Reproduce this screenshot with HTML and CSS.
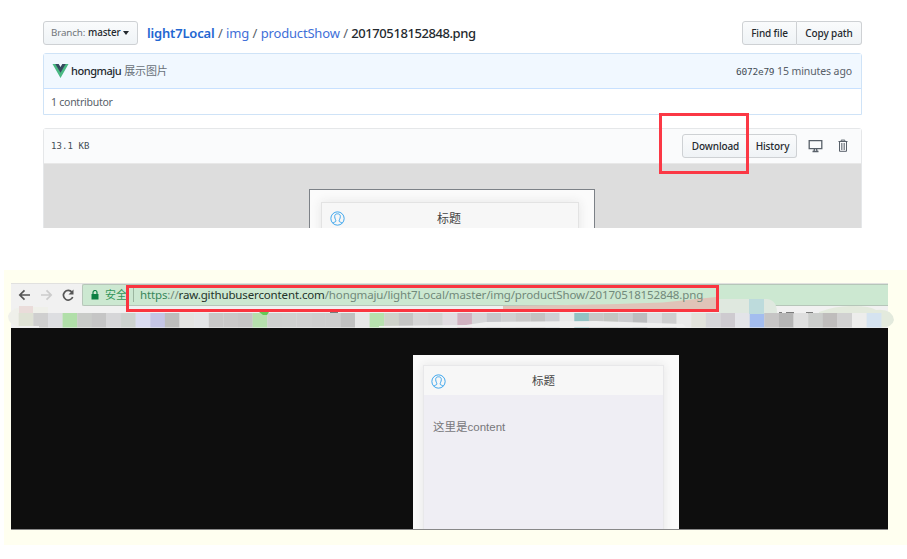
FILE: index.html
```html
<!DOCTYPE html>
<html lang="zh">
<head>
<meta charset="utf-8">
<title>light7Local</title>
<link rel="stylesheet" href="styles.css">
</head>
<body>
<svg class="defs" width="0" height="0"><symbol id="user" viewBox="0 0 16 16"><circle cx="8" cy="8" r="7.1"/><path d="M3 13c1-1.3 3.2-1 3.3-2.3C6.400 9.500 5 8.500 5 5.800 5 3.800 6.200 3 8 3s3 .8 3 2.800c0 2.700-1.400 3.700-1.300 4.900.1 1.300 2.300 1 3.300 2.300"/></symbol></svg>
<section class="repo">
  <header class="pathbar">
    <button class="btn branch"><span>Branch:</span> <b>master</b><i></i></button>
    <nav class="crumbs"><a class="root">light7Local</a> / <a>img</a> / <a>productShow</a> / <strong>20170518152848.png</strong></nav>
    <div class="group"><button class="btn find">Find file</button><button class="btn copy">Copy path</button></div>
  </header>
  <div class="commit">
    <div class="author">
      <svg class="vue" viewBox="0 0 16 14"><path fill="#4ab983" d="M0 0h3.400L8 7.700 12.600 0H16L8 14z"/><path fill="#35495e" d="M2.800 0h3.400L8 3 9.800 0h3.400L8 8.800z"/></svg>
      <b>hongmaju</b><span class="message">展示图片</span>
      <div class="when"><code>6072e79</code> 15 minutes ago</div>
    </div>
    <div class="contributors">1 contributor</div>
  </div>
  <div class="file">
    <div class="filebar">
      <code>13.1 KB</code>
      <div class="group download-group"><button class="btn download">Download</button><button class="btn history">History</button><span class="redbox"></span></div>
      <svg class="monitor" viewBox="0 0 14 14"><path d="M.7 1.700h12.600v8H.7zM6 10l-.5 2.200M8 10l.5 2.200M4 12.500h6"/></svg>
      <svg class="trash" viewBox="0 0 10 14"><path d="M.5 2.500h9M3.200 2.300V1.100h3.600v1.200M1.500 3v9.300h7V3"/><path class="slats" d="M3.500 4v7M5 4v7M6.500 4v7"/></svg>
    </div>
    <div class="preview"><div class="shot"><div class="phone"><div class="titlebar"><svg><use href="#user"/></svg><span>标题</span></div></div></div></div>
  </div>
</section>
<section class="raw">
  <div class="browser">
    <div class="toolbar">
      <svg class="nav" viewBox="0 0 71 23"><g fill="none" stroke-width="1.700"><path stroke="#555" d="M19 11H9M13.500 6.300 8.800 11l4.700 4.700"/><path stroke="#ccc" d="M30 11h10M35.500 6.300l4.700 4.700-4.700 4.700"/><path stroke="#555" d="M61 8.300A4.800 4.800 0 1 0 61.700 13"/></g><path fill="#555" d="M62.500 5.500v5h-5z"/></svg>
      <div class="address">
        <svg class="lock" viewBox="0 0 8 10"><path fill="#0b8043" d="M.5 4h7v5.500h-7z"/><path fill="none" stroke="#0b8043" stroke-width="1.200" d="M2 4V2.500a2 2 0 0 1 4 0V4"/></svg>
        <span class="safe">安全</span><span class="divider"></span>
        <span class="tint"></span>
        <span class="url"><span class="scheme">https</span>://<b>raw.githubusercontent.com</b>/hongmaju/light7Local/master/img/productShow/20170518152848.png</span>
        <span class="redframe"></span>
      </div>
    </div>
    <div class="bookmarks">
      <svg class="mosaic" viewBox="0 0 890 34">
        <path fill="#eff0ea" d="M22 10h26v20H20Q8 28 8 19 10 12 22 10z"/>
        <path fill="#e3eadd" d="M819 15q18-7 35-6 16 0 22 4 16-2 18 10-2 9-18 7h-15V17h-42z"/>
        <path fill="#eadcda" d="M19 9h14v8H19z"/>
        <path stroke="#555" stroke-width="1.500" d="M330 16h8M779 16h3M786 16h8M806 16h7"/>
        <g id="tiles"></g>
        <path fill="#66c956" d="M259 15h10l-2 3h-4z"/>
        <path fill="#efefef" d="M379 29l87-1 20-3 110-1 87 3 3 3H379zM18 29h21v2H18z"/>
      </svg>
      <svg class="smudge" viewBox="0 0 60 15"><path fill="#dfe8df" d="M0 0h48q10 1 10 14H0z"/><path fill="#bddbdc" d="M30 0h15v15H30z"/></svg>
    </div>
    <div class="canvas"><div class="shot2"><div class="phone2"><div class="titlebar2"><svg><use href="#user"/></svg><span>标题</span></div><p>这里是content</p></div></div></div>
  </div>
</section>
<script src="mosaic.js"></script>
</body>
</html>
```
FILE: styles.css
```css
*{box-sizing:border-box}
body{margin:0;width:907px;height:559px;overflow:hidden;background:#fff;color:#24292e;font:11px/16px "Noto Sans","Noto Sans CJK SC",sans-serif}
button{font:inherit}
b{font-weight:600}
code{font:10px "DejaVu Sans Mono",monospace}
.defs{position:absolute}
symbol{fill:none;stroke:#35a2ec;stroke-width:1}
.repo{height:228px;padding:21px 46px 0 43px;width:907px;overflow:hidden}
.pathbar{display:flex;height:24px;align-items:center}
.btn{height:24px;padding:0;border:1px solid #ced1d4;border-radius:3px;background:linear-gradient(#fafbfc,#eff3f6);color:#24292e;font-size:10px;font-weight:500;line-height:22px;letter-spacing:-.12px;white-space:nowrap}
.branch{width:95px;display:flex;align-items:center;padding-left:7px;font-size:9.800px;letter-spacing:-.15px}
.branch b{font-weight:500}
.branch span{color:#707579;font-weight:400;margin-right:3px}
.branch i{border:3.500px solid transparent;border-top:4px solid #24292e;border-bottom:0;margin-left:3px}
.crumbs{margin-left:9px;font-size:13px;line-height:24px;white-space:nowrap;color:#586069;width:335px;letter-spacing:-.18px;word-spacing:.3px}
.crumbs a{color:#416fd8}.crumbs .root{font-weight:600;color:#2366d1}.crumbs strong{font-weight:500;color:#24292e;letter-spacing:-.43px}
.group{display:flex;margin-left:auto}
.group .btn:first-child{border-radius:3px 0 0 3px}
.group .btn:nth-child(2){border-left:0;border-radius:0 3px 3px 0}
.find{width:55px}.copy{width:65px}
.pathbar .group{margin-right:-1px}
.commit{margin-top:8px;width:819px;height:62px;border:1px solid #cfe3f7;border-radius:3px 3px 0 0}
.author{height:35px;padding:0 9px 0 8px;background:#f1f8ff;border-bottom:1px solid #c8e1ff;display:flex;align-items:center}
.vue{width:17px;height:14px;margin-right:2px}
.message{color:#687078;margin-left:3px;letter-spacing:-.2px}
.author b{letter-spacing:-.45px;font-weight:500}
.when{margin-left:auto;color:#586069;font-size:10.500px;letter-spacing:-.1px}
.when code{color:#444d56;font-size:9.500px;letter-spacing:-.25px}
.contributors{padding:5px 7px;color:#586069;font-size:10.500px;line-height:16px;letter-spacing:-.25px}
.file{margin-top:13px;width:819px;border:1px solid #e5e7e9;border-radius:3px 3px 0 0}
.filebar{height:35px;background:#fafbfc;border-bottom:1px solid #e8e8e8;display:flex;align-items:center;padding:0 13px 0 7px}
.filebar code{font-size:9px;color:#444d56;letter-spacing:.1px}
.download-group{position:relative}
.download{width:67px}.history{width:48px}
.redbox{position:absolute;left:-23px;top:-21px;width:90px;height:61px;border:3px solid #fb3845}
.monitor,.trash{fill:none;stroke:#586069}
.monitor{width:15px;height:14px;margin-left:11px;stroke-width:1.300}
.trash{width:10px;height:14px;margin-left:15px}
.slats{stroke-width:.7}
.preview{height:80px;background:#ddd;padding:25px 0 0 265px}
.shot{width:286px;height:80px;border:1px solid #7c8187;background:#fbfbfb;padding:12px 0 0 11px}
.phone{width:258px;height:60px;border:1px solid #e3e3e3;box-shadow:0 0 10px #e6e6e6;background:#f7f7f7}
.titlebar{display:grid;grid-template-columns:32px 1fr 34px;padding-top:7px;color:#444;font-size:12px;text-align:center;line-height:17px}
.titlebar svg,.titlebar2 svg{width:15px;height:15px;margin-left:8px}
.titlebar svg{margin-top:1px}
.raw{margin:42px 0 0 4px;height:275px;background:#fffff0;padding:13px 0 0 7px}
.browser{width:877px;height:247px;border-bottom:1px solid #888;background:#f1f1f1}
.toolbar{position:relative;z-index:1;height:23px;display:flex;border-top:1px solid #e1e1df}
.nav{width:71px;height:23px}
.address{position:relative;width:806px;height:22px;border:1px solid #b6c6b9;border-right:0;border-radius:2px 0 0 2px;background:#cce8d1;display:flex;align-items:center}
.lock{width:8px;height:10px;margin-left:8px}
.safe{font-size:11px;color:#33965a;margin-left:6px;width:23px;white-space:nowrap}
.divider{width:1px;height:14px;background:#9cb6a0;margin-left:5px}
.url{position:relative;font-size:11.500px;line-height:16px;margin-left:6px;white-space:nowrap;color:#71897a;letter-spacing:-.135px}
.url b{font-weight:400;color:#24332a}.scheme{color:#36865a}
.tint{position:absolute;left:420px;top:12px;width:213px;height:12px;background:#e0c3b8;clip-path:polygon(0 75%,50% 60%,75% 45%,100% 0,100% 100%,0 100%)}
.redframe{position:absolute;left:43px;top:0;width:593px;height:27px;border:3px solid #fa3540}
.bookmarks{height:22px;position:relative}
.mosaic{position:absolute;left:-11px;top:-9px;width:890px;height:34px;overflow:visible}
.smudge{position:absolute;z-index:2;left:708px;top:-7px;width:60px;height:15px}
.canvas{height:201px;background:#0e0e0e;padding:27px 0 0 402px}
.shot2{height:174px;width:266px;background:#fafafa;padding:10px 0 0 10px;overflow:hidden}
.phone2{width:241px;height:174px;background:#efeef4;border:1px solid #e8e8ea;box-shadow:0 0 9px #e4e4e4}
.titlebar2{height:29px;background:#f7f7f7;display:grid;grid-template-columns:32px 1fr 32px;text-align:center;color:#444;font-size:11.500px;line-height:29px}
.titlebar2 svg{margin-top:8px;margin-left:7px}
.phone2 p{margin:23px 0 0 9px;font:11.500px/18px "Liberation Sans","Noto Sans CJK SC",sans-serif;color:#77777b}
```
FILE: mosaic.js
```js
const colors = 'dfe2d5 cfcfcf dddee1 b1dfa9 c9cbc8 c5c5c5 d6d6d8 cdd2cf dadcf0 c4c5e5 bdbdbc e4e4e2 e4e5e7 c9c8c8 c9c8c8 c6c5c5 b6dfad cfd0cf d0d1d0 d0d0d0 cecece cecece c0c0c0 e6e6e6 b7e1ae cfd2ca c5c5c4 d6d6d6 d3d3d3 e1dce1 d1b1c0 d6d6d8 c7c7cb d0d0d1 cac8c8 c3c2c2 cecfd3 e9e9e9 93c3c4 c8c8c7 c3c5c1 cccccf bcbdbf dedee0 cececf eaeaea e2e3dc d6d6d9 cecbd0 e3e4e8 a3bdef c6c5c5 b5b5b5 dfdfdf cbcdcb bfbdbc d1d1d1 ededec d5e3f0'.split(' ');
const tiles = document.getElementById('tiles');
colors.forEach((color, i) => {
  const tile = document.createElementNS('http://www.w3.org/2000/svg', 'rect');
  tile.setAttribute('x', 18.7 + i * 14.62);
  tile.setAttribute('y', 16);
  tile.setAttribute('width', 14.8);
  tile.setAttribute('height', 14.5);
  tile.setAttribute('fill', '#' + color);
  tiles.append(tile);
});
```
